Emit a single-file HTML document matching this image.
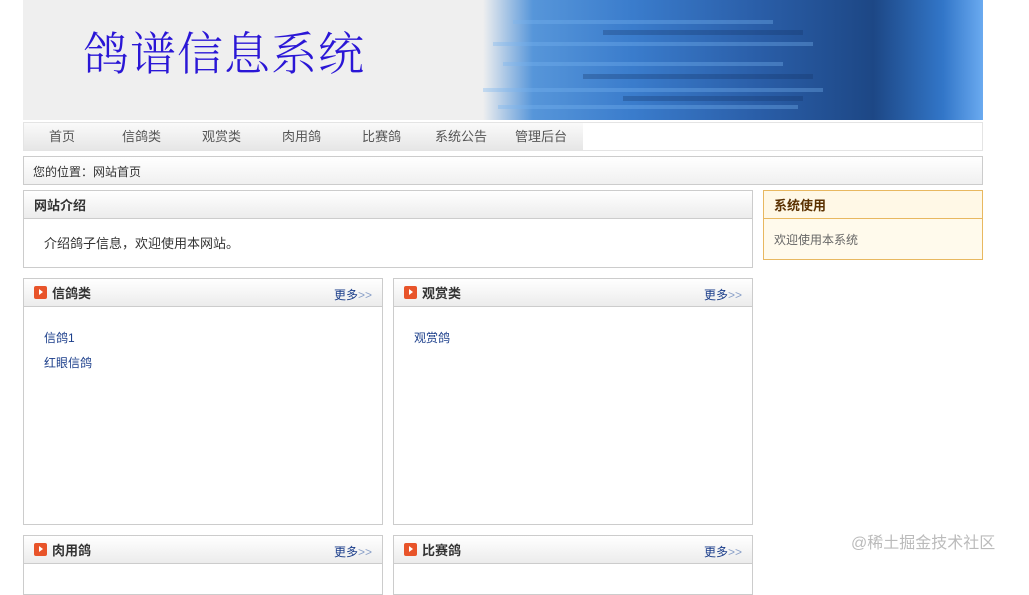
<!DOCTYPE html>
<html><head><meta charset="utf-8"><style>
*{margin:0;padding:0;box-sizing:border-box}
body{width:1029px;height:570px;overflow:hidden;background:#fff;font-family:"Liberation Sans","Noto Sans CJK SC",sans-serif;font-size:12px;color:#333;position:relative}
.abs{position:absolute}
#banner{left:23px;top:0;width:960px;height:120px;background:#efefef;overflow:hidden}
#blue{left:460px;top:0;width:500px;height:120px;background:linear-gradient(90deg,rgba(239,239,239,1) 0%,rgba(70,140,215,.9) 10%,#3a7ccc 30%,#2a5ea8 55%,#1d4785 78%,#3276c8 92%,#6aaaf0 100%)}
.streak{position:absolute;height:4px;background:rgba(120,180,240,.35)}
.dk{position:absolute;height:5px;background:rgba(20,50,100,.3)}
#title{left:83px;top:18px;font-size:46px;color:#2a16d6;font-family:"Noto Serif CJK SC",serif;letter-spacing:1px;font-weight:300}
#nav{left:23px;top:122px;width:960px;height:29px;border:1px solid #e4e4e4;background:#fff}
#navin{position:absolute;left:0;top:0;width:559px;height:27px;background:linear-gradient(#fafafa,#e6e6e6)}
#nav span{position:absolute;top:3px;font-size:13px;color:#555}
#pos{left:23px;top:156px;width:960px;height:29px;border:1px solid #ccc;background:linear-gradient(#fff,#f0f0f0);padding:6px 9px;font-size:12px;color:#333}
.box{position:absolute;border:1px solid #ccc;background:#fff}
.hd{height:28px;border-bottom:1px solid #ccc;background:linear-gradient(#fff,#ececec);font-weight:bold;font-size:13px;color:#333;padding:4px 10px;position:relative}
.ic{display:inline-block;width:13px;height:13px;background:#e8542a;border-radius:2px;vertical-align:-1px;margin-right:5px;position:relative}
.ic:after{content:"";position:absolute;left:5px;top:3px;border-left:4px solid #fff;border-top:3.5px solid transparent;border-bottom:3.5px solid transparent}
.more{position:absolute;right:10px;top:7px;font-weight:normal;font-size:12px;color:#1a3d8a}
.more i{font-style:normal;color:#8aa0c8}
.lk{color:#1a3d8a;font-size:12px;position:absolute;left:20px}
</style></head><body>
<div id="banner" class="abs">
<div id="blue" class="abs">
<div class="streak" style="left:30px;top:20px;width:260px"></div>
<div class="streak" style="left:10px;top:42px;width:320px"></div>
<div class="streak" style="left:20px;top:62px;width:280px"></div>
<div class="streak" style="left:0px;top:88px;width:340px"></div>
<div class="streak" style="left:15px;top:105px;width:300px"></div>
<div class="dk" style="left:120px;top:30px;width:200px"></div>
<div class="dk" style="left:100px;top:74px;width:230px"></div>
<div class="dk" style="left:140px;top:96px;width:180px"></div>
</div>
</div>
<div id="title" class="abs">鸽谱信息系统</div>
<div id="nav" class="abs"><div id="navin"></div>
<span style="left:25px">首页</span><span style="left:98px">信鸽类</span><span style="left:178px">观赏类</span><span style="left:258px">肉用鸽</span><span style="left:338px">比赛鸽</span><span style="left:411px">系统公告</span><span style="left:491px">管理后台</span></div>
<div id="pos" class="abs">您的位置：网站首页</div>
<div class="box" style="left:23px;top:190px;width:730px;height:78px"><div class="hd">网站介绍</div><div style="padding:14px 20px;font-size:13px">介绍鸽子信息，欢迎使用本网站。</div></div>
<div class="box" style="left:763px;top:190px;width:220px;height:70px;border-color:#e8b860;background:#fffaec"><div class="hd" style="background:#fff8e6;border-color:#e8b860;color:#5a3000">系统使用</div><div style="padding:12px 10px;color:#666">欢迎使用本系统</div></div>
<div class="box" style="left:23px;top:278px;width:360px;height:247px"><div class="hd"><span class="ic"></span>信鸽类<span class="more">更多<i>&gt;&gt;</i></span></div><span class="lk" style="top:50px">信鸽1</span><span class="lk" style="top:75px">红眼信鸽</span></div>
<div class="box" style="left:393px;top:278px;width:360px;height:247px"><div class="hd"><span class="ic"></span>观赏类<span class="more">更多<i>&gt;&gt;</i></span></div><span class="lk" style="top:50px">观赏鸽</span></div>
<div class="box" style="left:23px;top:535px;width:360px;height:60px"><div class="hd"><span class="ic"></span>肉用鸽<span class="more">更多<i>&gt;&gt;</i></span></div></div>
<div class="box" style="left:393px;top:535px;width:360px;height:60px"><div class="hd"><span class="ic"></span>比赛鸽<span class="more">更多<i>&gt;&gt;</i></span></div></div>
<div class="abs" style="left:851px;top:529px;font-size:16px;color:#bbb">@稀土掘金技术社区</div>
</body></html>
